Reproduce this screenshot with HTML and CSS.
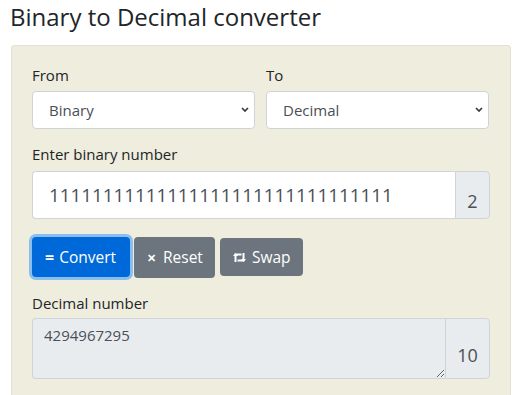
FILE: index.html
```html
<!DOCTYPE html>
<html lang="en">
<head>
<meta charset="utf-8">
<title>Binary to Decimal converter</title>
<link rel="stylesheet" href="styles.css">
</head>
<body>
<div class="page">
  <h1 class="title">Binary to Decimal converter</h1>
  <div class="card">
    <div class="row2">
      <div class="field">
        <label class="lbl">From</label>
        <select class="sel"><option>Binary</option></select>
      </div>
      <div class="field">
        <label class="lbl">To</label>
        <select class="sel"><option>Decimal</option></select>
      </div>
    </div>
    <label class="lbl lbl-gap">Enter binary number</label>
    <div class="igroup">
      <input class="inp" type="text" value="11111111111111111111111111111111">
      <span class="addon addon-sm">2</span>
    </div>
    <div class="btns">
      <button class="btn btn-primary"><span class="ico">=</span>Convert</button>
      <button class="btn btn-gray reset"><span class="ico x">&#x2715;</span>Reset</button>
      <button class="btn btn-gray swap"><svg class="swapico" width="13" height="11" viewBox="0 0 13 11"><path d="M2.5 10V2.5H8.5" fill="none" stroke="#fff" stroke-width="2"/><path d="M0 4L2.5 1L5 4Z" fill="#fff"/><path d="M10.5 1V8.5H4.5" fill="none" stroke="#fff" stroke-width="2"/><path d="M8 7L10.5 10L13 7Z" fill="#fff"/></svg>Swap</button>
    </div>
    <label class="lbl lbl-gap2">Decimal number</label>
    <div class="igroup tgroup">
      <textarea class="ta" readonly>4294967295</textarea>
      <span class="addon addon-lg">10</span>
    </div>
  </div>
</div>
</body>
</html>
```
FILE: styles.css
```css
html, body {
  margin: 0;
  padding: 0;
  background: #fff;
}
body {
  font-family: "Open Sans", "Noto Sans", sans-serif;
  color: #212529;
  font-size: 16px;
}
.page {
  padding: 0 11px;
  width: 500px;
}
.title {
  font-size: 24px;
  font-weight: 400;
  line-height: 1.2;
  margin: 0 0 13px -1px;
  padding-top: 3px;
  color: #212529;
}
.card {
  background: #efedde;
  border: 1px solid #e3e0d0;
  border-bottom: none;
  border-radius: 4px 4px 0 0;
  padding: 17px 20px 0 20px;
  height: 350px;
  box-sizing: border-box;
}
.row2 {
  display: grid;
  grid-template-columns: 223px 223px;
  column-gap: 11px;
}
.field {
  display: flex;
  flex-direction: column;
}
.lbl {
  display: block;
  font-size: 15px;
  line-height: 24px;
  margin-bottom: 4px;
}
.lbl-gap {
  margin-top: 13px;
  margin-bottom: 5px;
}
.lbl-gap2 {
  margin-top: 13px;
  margin-bottom: 3px;
}
.sel {
  appearance: none;
  -webkit-appearance: none;
  height: 38px;
  border: 1px solid #ced4da;
  border-radius: 4px;
  background: #fff url("data:image/svg+xml;utf8,<svg xmlns='http://www.w3.org/2000/svg' width='8' height='5' viewBox='0 0 8 5'><path d='M1 1l3 3 3-3' fill='none' stroke='%23343a40' stroke-width='1.7'/></svg>") no-repeat right 5px center;
  font-family: inherit;
  font-size: 15px;
  color: #495057;
  padding: 0 24px 0 16px;
  width: 100%;
}
.igroup {
  display: flex;
  align-items: stretch;
}
.inp {
  flex: 1;
  min-width: 0;
  height: 48px;
  box-sizing: border-box;
  border: 1px solid #ced4da;
  border-right: none;
  border-radius: 4px 0 0 4px;
  padding: 0 16px;
  font-family: inherit;
  font-size: 18.8px;
  color: #495057;
  background: #fff;
}
.addon {
  display: flex;
  align-items: flex-end;
  justify-content: center;
  background: #e9ecef;
  border: 1px solid #ced4da;
  border-radius: 0 4px 4px 0;
  color: #495057;
  box-sizing: border-box;
}
.addon-sm {
  width: 35px;
  font-size: 18px;
  line-height: 24px;
  padding-bottom: 5px;
}
.btns {
  display: flex;
  align-items: center;
  gap: 4px;
  margin-top: 18px;
}
.btn {
  font-family: inherit;
  font-size: 15.5px;
  color: #fff;
  border: none;
  border-radius: 4px;
  height: 40px;
  display: flex;
  align-items: center;
  padding: 0 10px 0 13px;
  box-sizing: border-box;
}
.btn-primary {
  background: #0069d9;
  box-shadow: 0 0 0 3px rgba(38, 143, 255, 0.5);
  width: 98px;
}
.btn-gray {
  background: #6c757d;
}
.reset { width: 81px; height: 41px; }
.swap { width: 83px; height: 38px; margin-left: 1px; }
.ico {
  font-weight: 700;
  margin-right: 5px;
  font-size: 16px;
}
.ico.x {
  font-size: 11px;
  margin-right: 7px;
}
.swapico {
  margin-right: 6px;
}
.ta {
  flex: 1;
  height: 61px;
  box-sizing: border-box;
  border: 1px solid #ced4da;
  border-right: none;
  border-radius: 4px 0 0 4px;
  background: #e9ecef;
  font-family: inherit;
  font-size: 15px;
  color: #495057;
  padding: 6px 11px;
  resize: vertical;
}
.addon-lg {
  width: 45px;
  font-size: 18px;
  line-height: 24px;
  padding-bottom: 11px;
}
```
